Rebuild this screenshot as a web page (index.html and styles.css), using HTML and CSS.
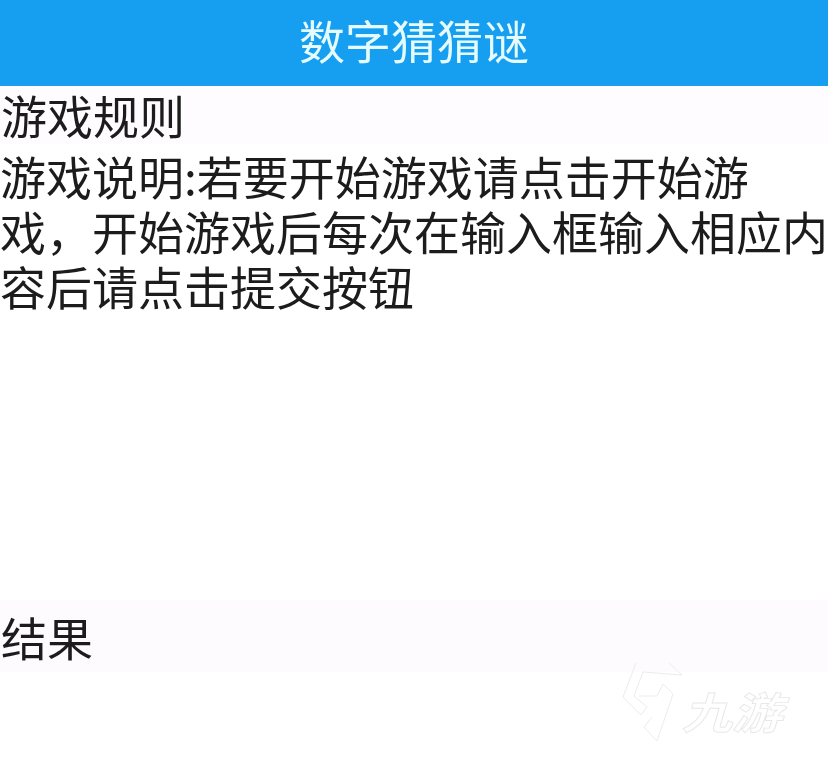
FILE: index.html
```html
<!DOCTYPE html>
<html lang="zh-CN">
<head>
<meta charset="utf-8">
<title>数字猜猜谜</title>
<link rel="stylesheet" href="styles.css">
</head>
<body>
<div class="screen">
  <header class="app-bar">数字猜猜谜</header>
  <section class="rules">
    <h2 class="section-title">游戏规则</h2>
    <p class="rules-text">游戏说明:若要开始游戏请点击开始游戏，开始游戏后每次在输入框输入相应内容后请点击提交按钮</p>
  </section>
  <section class="result">
    <h2 class="section-title result-title">结果</h2>
  </section>
</div>
<div class="watermark">
  <svg class="watermark-mark" viewBox="0 0 62 80" width="62" height="80" aria-hidden="true">
    <path d="M14 0 L1 34 L19 52 L25 44 L12 33 L21 9 L60 12 L47 0 M17 33 L35 33 L41 21 L51 31 L35 78 L22 64 L30 54"/>
  </svg>
  <span class="watermark-text">九游</span>
</div>
</body>
</html>
```

FILE: styles.css
```css
* {
  box-sizing: border-box;
}

html,
body {
  margin: 0;
  padding: 0;
}

body {
  width: 828px;
  height: 774px;
  overflow: hidden;
  position: relative;
  background: #fff;
  color: #1c1c1c;
  font-family: "Noto Sans CJK SC", "Noto Sans", sans-serif;
}

.screen {
  filter: blur(0.7px);
}

.app-bar {
  height: 86px;
  background: #169ff0;
  color: #e6fbff;
  font-size: 46px;
  line-height: 78px;
  text-align: center;
}

.rules {
  height: 514px;
}

.section-title {
  height: 58px;
  margin: 0;
  padding-left: 1px;
  font-size: 46px;
  font-weight: 400;
  line-height: 56px;
  background: #fefcfe;
}

.rules-text {
  margin: 0;
  padding-top: 4px;
  font-size: 46px;
  line-height: 55px;
}

.result-title {
  height: 72px;
  line-height: 73px;
  background: #fdfbfe;
}

.watermark {
  position: absolute;
  left: 622px;
  top: 663px;
  display: flex;
  align-items: flex-start;
}

.watermark-mark {
  flex: none;
  fill: none;
  stroke: #ececec;
  stroke-width: 1;
}

.watermark-text {
  margin: 17px 0 0 -2px;
  font-size: 50px;
  font-style: italic;
  font-weight: 700;
  line-height: 60px;
  color: #fff;
  -webkit-text-stroke: 1px #e8e8e8;
  transform: scaleY(0.86);
}
```
